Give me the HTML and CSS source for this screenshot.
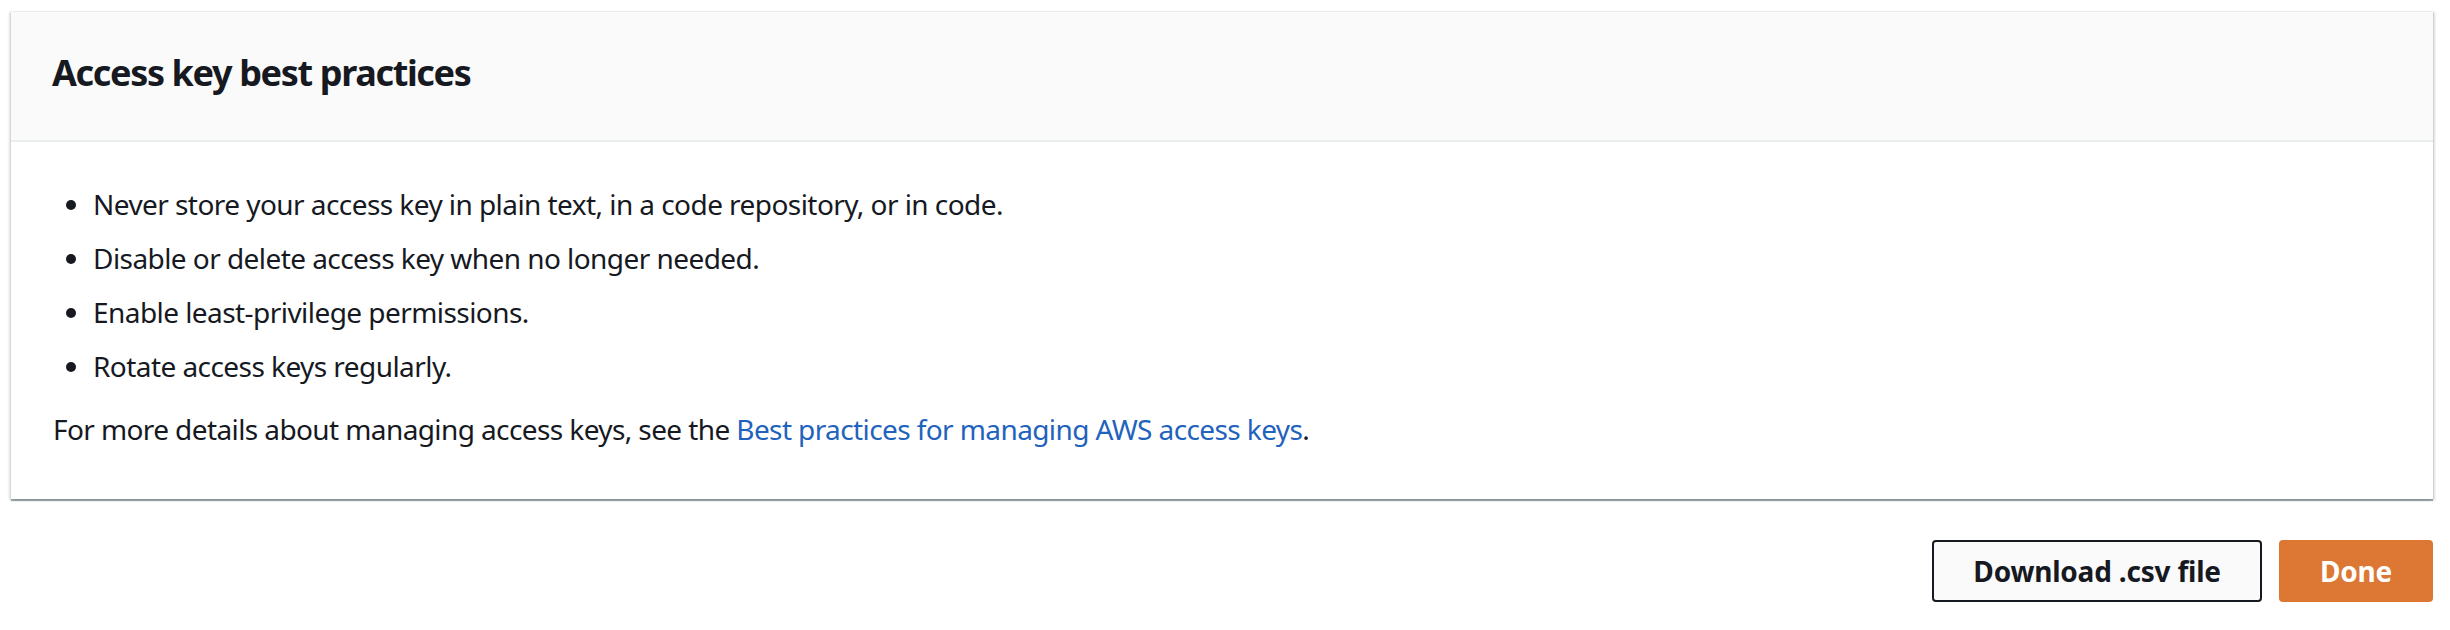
FILE: index.html
```html
<!DOCTYPE html>
<html lang="en">
<head>
<meta charset="utf-8">
<title>Access key best practices</title>
<link rel="stylesheet" href="styles.css">
</head>
<body>
<div class="page">
  <section class="card">
    <header class="card-header">
      <h2 class="card-title">Access key best practices</h2>
    </header>
    <div class="card-body">
      <ul class="practices">
        <li>Never store your access key in plain text, in a code repository, or in code.</li>
        <li>Disable or delete access key when no longer needed.</li>
        <li>Enable least-privilege permissions.</li>
        <li>Rotate access keys regularly.</li>
      </ul>
      <p class="more">For more details about managing access keys, see the <a class="link" href="#">Best practices for managing AWS access keys</a>.</p>
    </div>
  </section>
  <div class="actions">
    <button class="btn btn-normal" type="button">Download .csv file</button>
    <button class="btn btn-primary" type="button">Done</button>
  </div>
</div>
</body>
</html>
```
FILE: styles.css
```css
html, body {
  margin: 0;
  padding: 0;
  background: #ffffff;
}

body {
  font-family: "Noto Sans", "Open Sans", "DejaVu Sans", sans-serif;
  color: #16191f;
}

.page {
  padding: 11px 17px 0 11px;
}

.card {
  background: #ffffff;
  border-top: 1px solid #eaeded;
  box-shadow: 0 2px 1px 0 rgba(0, 28, 36, 0.35), 2px 1px 2px 0 rgba(0, 28, 36, 0.15), -2px 1px 2px 0 rgba(0, 28, 36, 0.12);
}

.card-header {
  background: #fafafa;
  border-bottom: 2px solid #eaeded;
  padding: 37px 40px 43px 41px;
}

.card-title {
  margin: 0;
  font-size: 36px;
  line-height: 48px;
  font-weight: 700;
  letter-spacing: -1.35px;
}

.card-body {
  padding: 42px 40px 50px 42px;
  font-size: 28px;
  line-height: 40px;
  letter-spacing: -0.56px;
}

.practices {
  margin: 0;
  padding: 0 0 0 40px;
  display: flex;
  flex-direction: column;
  gap: 14px;
}

.practices li {
  padding-left: 0;
}

.more {
  margin: 23px 0 0 0;
  letter-spacing: -0.6px;
}

.link {
  color: #1f63bd;
  text-decoration: none;
}

.actions {
  display: flex;
  justify-content: flex-end;
  gap: 17px;
  margin-top: 41px;
}

.btn {
  font-family: "Noto Sans", "Open Sans", "DejaVu Sans", sans-serif;
  font-size: 28px;
  font-weight: 700;
  letter-spacing: -0.2px;
  height: 62px;
  padding: 0 39px;
  border-radius: 4px;
  border: 2px solid #16191f;
  cursor: pointer;
}

.btn-normal {
  background: #fafafa;
  color: #16191f;
}

.btn-primary {
  background: #dd7734;
  border-color: #dd7734;
  color: #ffffff;
}
```
